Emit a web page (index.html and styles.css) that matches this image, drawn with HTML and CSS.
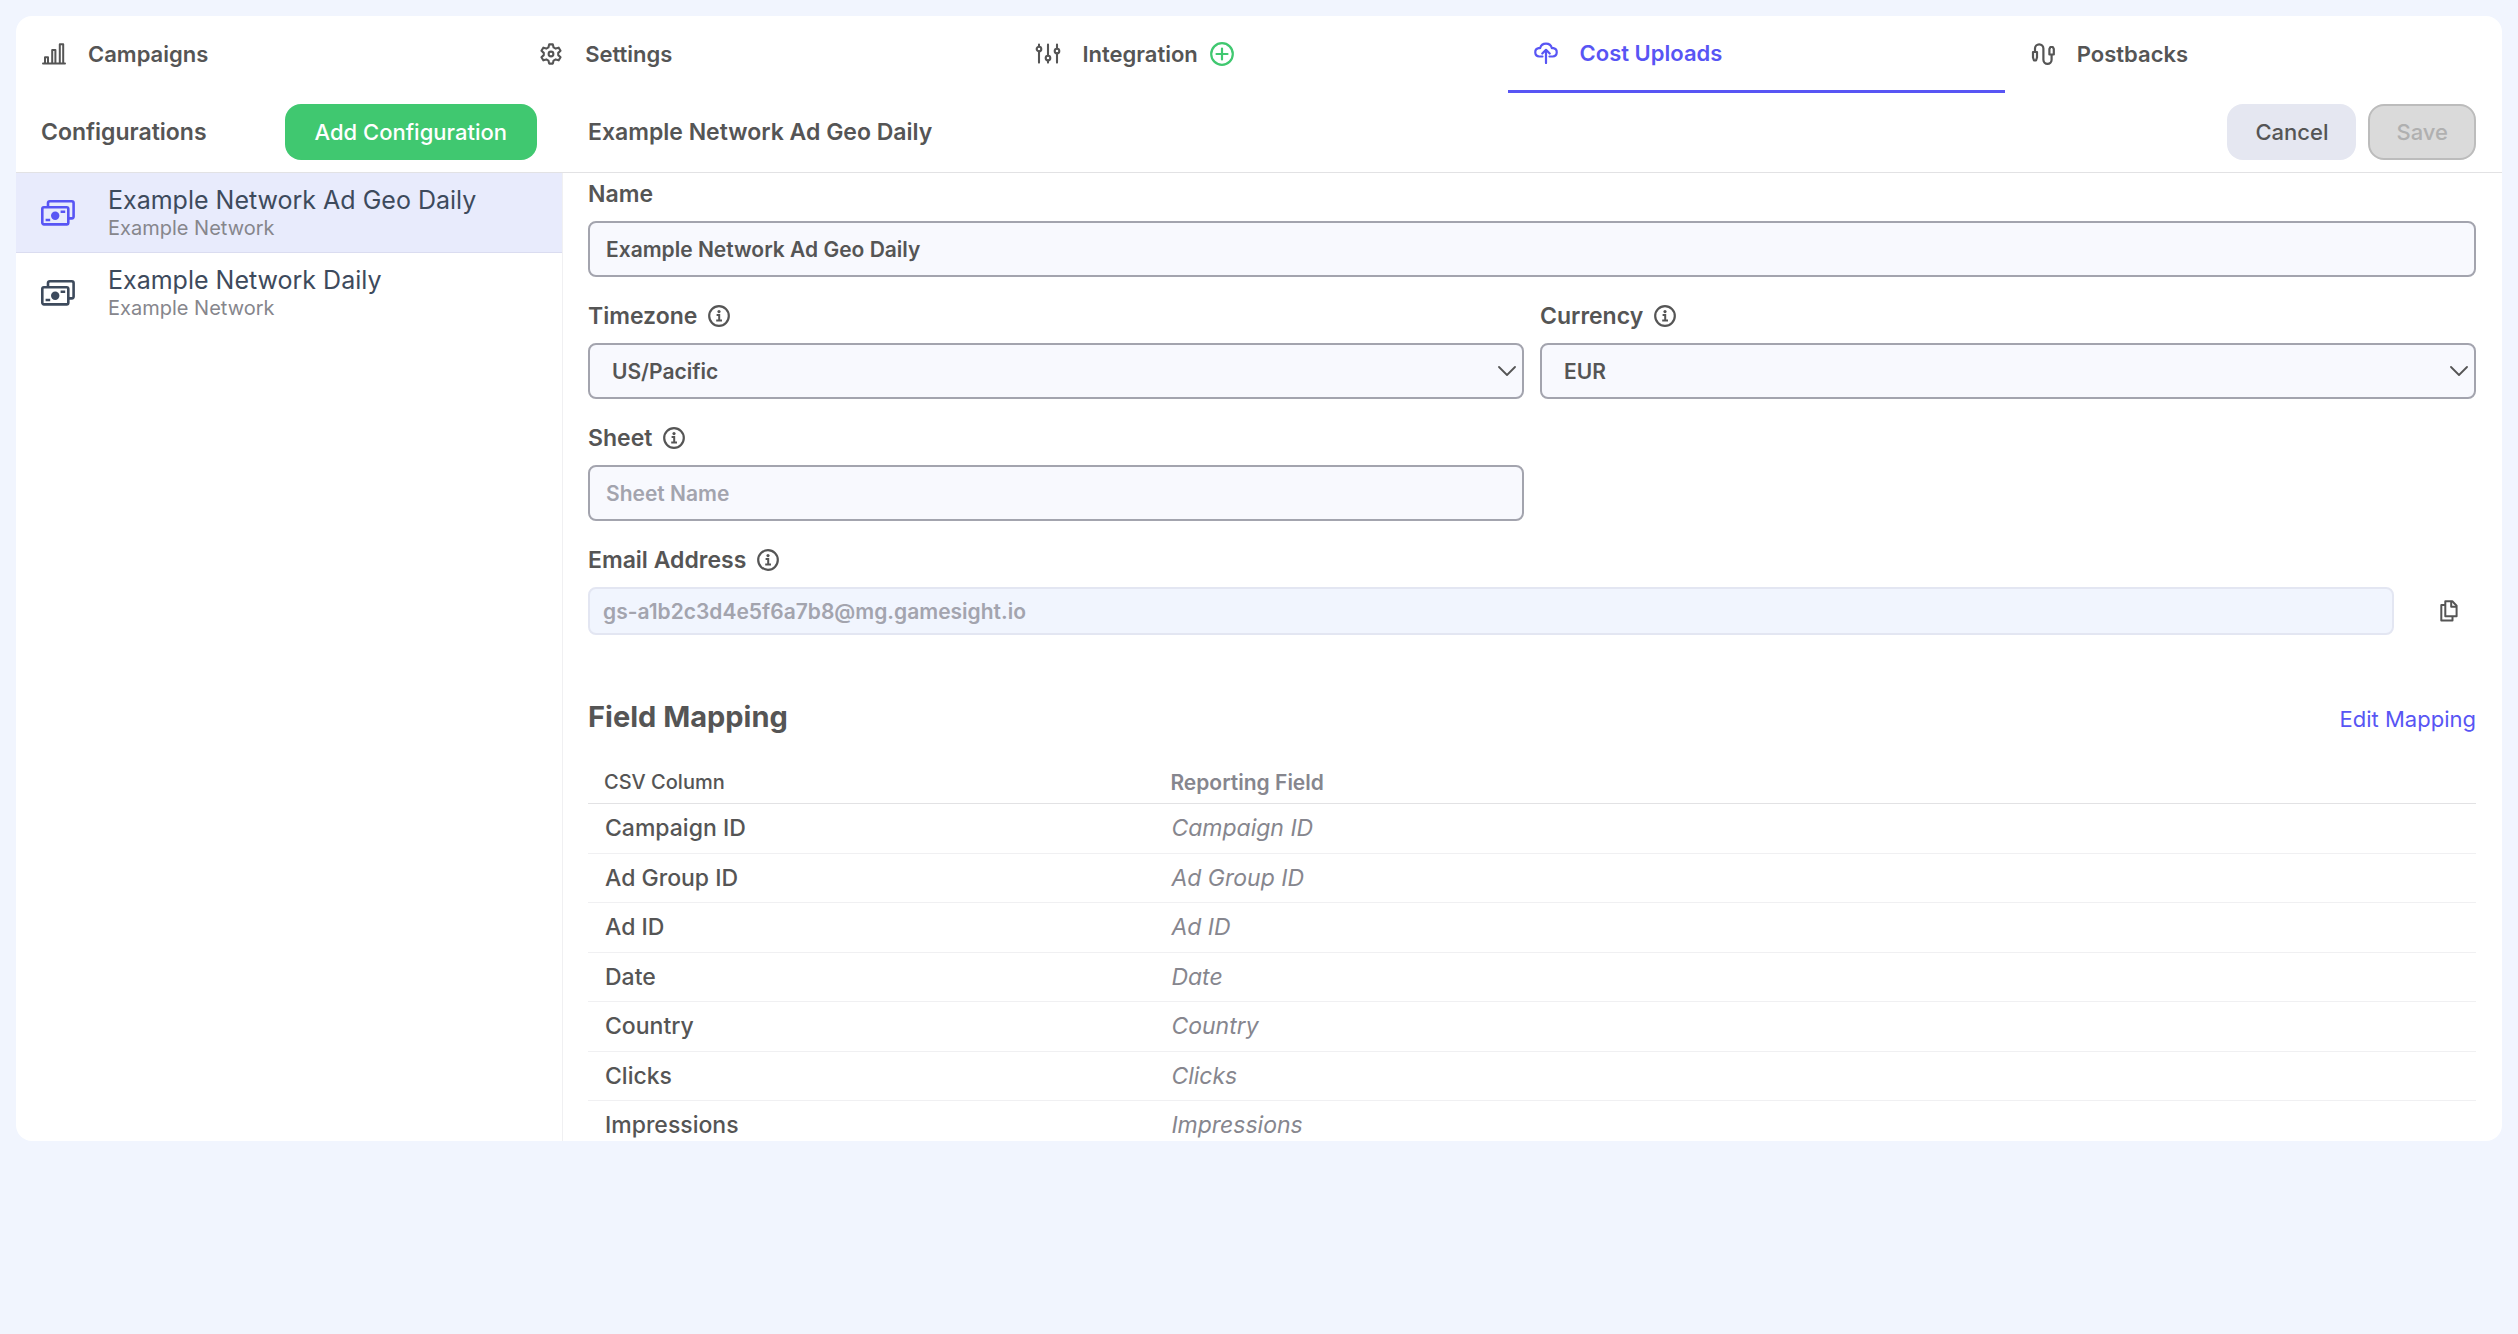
FILE: index.html
```html
<!DOCTYPE html>
<html lang="en">
<head>
<meta charset="utf-8">
<title>Cost Uploads</title>
<link rel="stylesheet" href="styles.css">
</head>
<body>
<svg width="0" height="0" class="sprite" aria-hidden="true">
  <symbol id="info" viewBox="0 0 22 22">
    <circle cx="11" cy="11" r="9.8" fill="none" stroke="currentColor" stroke-width="2.2"/>
    <circle cx="11" cy="6.6" r="1.6" fill="currentColor"/>
    <path d="M8.600 9.900h2.600v5.600M8.200 15.600h5.800" fill="none" stroke="currentColor" stroke-width="2"/>
  </symbol>
  <symbol id="chevron" viewBox="0 0 18 10">
    <path d="M1 1l8 8 8-8" fill="none" stroke="currentColor" stroke-width="1.8" stroke-linecap="round" stroke-linejoin="round"/>
  </symbol>
  <symbol id="cash" viewBox="0 0 34 26">
    <g fill="none" stroke="currentColor" stroke-width="2.6" stroke-linejoin="round">
      <rect x="1.300" y="7.200" width="26" height="17.200" rx="1.600"/>
      <path d="M7 7V3q0-1.700 1.800-1.700h22q1.800 0 1.800 1.700v13.600q0 1.800-1.800 1.800h-3.400"/>
    </g>
    <circle cx="14.200" cy="15.800" r="4.200" fill="currentColor"/>
    <path d="M19.600 10.600h4.600v2.400h-4.600zM4.600 18.800h4.600v2.400H4.600z" fill="currentColor"/>
  </symbol>
</svg>

<main class="card">
  <nav class="tabs">
    <a class="tab" href="#campaigns">
      <svg class="tab-icon" viewBox="0 0 24 22"><g fill="none" stroke="currentColor" stroke-width="2" stroke-linejoin="round"><path d="M1 20.500h22" stroke-linecap="round"/><path d="M3 20.500v-6.200h3v6.200M10.200 20.500V7h3.200v13.500M17.800 20.500V1.200h3.400v19.300"/></g></svg>
      <span>Campaigns</span>
    </a>
    <a class="tab" href="#settings">
      <svg class="tab-icon" viewBox="0 0 24 24"><g fill="none" stroke="currentColor" stroke-width="2.300" stroke-linejoin="round"><path d="M10 1.500h4l.8 3.300 2.300 1.300 3.300-1 2 3.400-2.500 2.300v2.400l2.500 2.300-2 3.400-3.300-1-2.300 1.300-.8 3.300h-4l-.8-3.300-2.300-1.300-3.300 1-2-3.400 2.500-2.300v-2.400L1.600 8.500l2-3.400 3.300 1 2.300-1.300z"/><circle cx="12" cy="12" r="2.600"/></g></svg>
      <span>Settings</span>
    </a>
    <a class="tab" href="#integration">
      <svg class="tab-icon" viewBox="0 0 24 22"><g fill="none" stroke="currentColor" stroke-width="2.100" stroke-linecap="round"><path d="M3 1.500v2M3 8.400v11.200M12 1.500v11M12 17.500v2.100M21 1.500v4M21 10.400v9.200"/><circle cx="3" cy="6" r="2.300"/><circle cx="12" cy="15" r="2.300"/><circle cx="21" cy="8" r="2.300"/></g></svg>
      <span>Integration</span>
      <svg class="plus" viewBox="0 0 24 24"><g fill="none" stroke="currentColor" stroke-width="2.200" stroke-linecap="round"><circle cx="12" cy="12" r="10.800"/><path d="M12 6.500v11M6.500 12h11"/></g></svg>
    </a>
    <a class="tab active" href="#cost-uploads" aria-current="page">
      <svg class="tab-icon" viewBox="0 0 24 22"><g fill="none" stroke="currentColor" stroke-width="2.200" stroke-linecap="round" stroke-linejoin="round"><path d="M8.500 14.500H5.200a4.200 4.200 0 0 1-.6-8.300h1.500a6.100 6.100 0 0 1 11.800 0h1.500a4.200 4.200 0 0 1-.6 8.300h-3.300"/><path d="M12 21V8M8.300 11.500L12 7.800l3.700 3.700"/></g></svg>
      <span>Cost Uploads</span>
    </a>
    <a class="tab" href="#postbacks">
      <svg class="tab-icon" viewBox="0 0 24 22"><g fill="none" stroke="currentColor" stroke-width="2.200" stroke-linejoin="round"><path d="M4 8.500V5.500a4.200 4.200 0 0 1 8.400 0v11.200a4.100 4.100 0 0 0 8.200 0V12"/><path d="M2 9h4v5.500L5 17.500H3l-1-3z"/><path d="M18.400 11.500V6l1-2h2.400l1 2v5.500z"/></g></svg>
      <span>Postbacks</span>
    </a>
  </nav>

  <header class="toolbar">
    <div class="toolbar-side">
      <h2 class="heading">Configurations</h2>
      <button type="button" class="btn btn-add">Add Configuration</button>
    </div>
    <div class="toolbar-main">
      <h2 class="heading">Example Network Ad Geo Daily</h2>
      <div class="actions">
        <button type="button" class="btn btn-cancel">Cancel</button>
        <button type="button" class="btn btn-save" disabled>Save</button>
      </div>
    </div>
  </header>

  <div class="body">
    <aside class="sidebar">
      <a class="item selected" href="#geo-daily">
        <svg class="item-icon"><use href="#cash"/></svg>
        <span class="item-text"><span class="item-title">Example Network Ad Geo Daily</span><span class="item-sub">Example Network</span></span>
      </a>
      <a class="item" href="#daily">
        <svg class="item-icon"><use href="#cash"/></svg>
        <span class="item-text"><span class="item-title">Example Network Daily</span><span class="item-sub">Example Network</span></span>
      </a>
    </aside>

    <section class="content">
      <form class="form">
        <div class="field wide">
          <label class="label" for="name">Name</label>
          <input class="control" id="name" type="text" value="Example Network Ad Geo Daily">
        </div>
        <div class="field">
          <label class="label" for="timezone">Timezone <svg class="info"><use href="#info"/></svg></label>
          <div class="select">
            <select class="control" id="timezone"><option>US/Pacific</option></select>
            <svg class="chevron"><use href="#chevron"/></svg>
          </div>
        </div>
        <div class="field">
          <label class="label" for="currency">Currency <svg class="info"><use href="#info"/></svg></label>
          <div class="select">
            <select class="control" id="currency"><option>EUR</option></select>
            <svg class="chevron"><use href="#chevron"/></svg>
          </div>
        </div>
        <div class="field start">
          <label class="label" for="sheet">Sheet <svg class="info"><use href="#info"/></svg></label>
          <input class="control" id="sheet" type="text" placeholder="Sheet Name">
        </div>
        <div class="field wide">
          <label class="label" for="email">Email Address <svg class="info"><use href="#info"/></svg></label>
          <div class="email-row">
            <input class="control email" id="email" type="text" value="gs-a1b2c3d4e5f6a7b8@mg.gamesight.io" disabled>
            <button type="button" class="copy" aria-label="Copy email address">
              <svg viewBox="0 0 18 22"><g fill="none" stroke="currentColor" stroke-width="2" stroke-linejoin="round"><path d="M5.300 1.300h7l4.300 4.400v10.600H5.300z"/><path d="M11.200 1.500v5.300h5.200"/><path d="M5 5H1.300v15.500h11.200v-4"/></g></svg>
            </button>
          </div>
        </div>
      </form>

      <div class="mapping-head">
        <h3 class="mapping-title">Field Mapping</h3>
        <a class="edit" href="#edit-mapping">Edit Mapping</a>
      </div>
      <table class="mapping">
        <thead><tr><th class="csv">CSV Column</th><th>Reporting Field</th></tr></thead>
        <tbody>
          <tr><td>Campaign ID</td><td>Campaign ID</td></tr>
          <tr><td>Ad Group ID</td><td>Ad Group ID</td></tr>
          <tr><td>Ad ID</td><td>Ad ID</td></tr>
          <tr><td>Date</td><td>Date</td></tr>
          <tr><td>Country</td><td>Country</td></tr>
          <tr><td>Clicks</td><td>Clicks</td></tr>
          <tr><td>Impressions</td><td>Impressions</td></tr>
        </tbody>
      </table>
    </section>
  </div>
</main>
</body>
</html>
```
FILE: styles.css
```css
* { box-sizing: border-box; }

body {
  margin: 0;
  padding: 16px;
  background: #f1f5fe;
  color: #555;
  font-family: Inter, "Liberation Sans", sans-serif;
  font-size: 22px;
}

h2, h3 { margin: 0; }
a { color: inherit; text-decoration: none; }
button, input, select { font: inherit; color: inherit; }
.sprite { position: absolute; }

.card {
  display: flex;
  flex-direction: column;
  height: calc(100vh - 209px);
  background: #fff;
  border-radius: 16px;
  overflow: hidden;
}

/* Tabs */
.tabs { display: grid; grid-template-columns: repeat(5, 1fr); height: 77px; flex: none; }
.tab {
  display: flex;
  align-items: center;
  padding: 0 25px;
  border-bottom: 2px solid transparent;
  font-weight: 600;
}
.tab-icon { width: 26px; height: 22px; margin-right: 21px; }
.tab.active { color: #5855f4; border-bottom: 3px solid #5855f4; }
.plus { width: 24px; height: 24px; margin-left: 12px; color: #40c870; }

/* Toolbar */
.toolbar { display: flex; height: 80px; flex: none; padding-bottom: 2px; border-bottom: 1px solid #e2e2e4; }
.toolbar-side, .toolbar-main { display: flex; align-items: center; justify-content: space-between; padding: 0 26px 0 25px; }
.toolbar-side { width: 547px; flex: none; }
.toolbar-main { flex: 1; }
.heading { font-size: 23px; font-weight: 600; line-height: 28px; }
.actions { display: flex; gap: 12px; }
.btn { height: 56px; border: 0; border-radius: 16px; padding: 0 28px; font-weight: 500; }
.btn-add { padding: 0 30px; background: #40c870; color: #fff; }
.btn-cancel { background: #e5e7f1; }
.btn-save { padding: 0 26px; background: #dadada; border: 2px solid #bcbcbc; color: #b0b0b0; }

/* Body */
.body { display: flex; flex: 1; min-height: 0; }
.sidebar { width: 547px; flex: none; border-right: 1px solid #f0f0f2; }
.item { display: flex; align-items: center; height: 80px; padding: 0 25px; color: #3d4a5c; }
.item.selected { background: #e8ebfc; border-bottom: 1px solid #dadcf0; }
.item.selected .item-icon { color: #5855f4; }
.item-icon { width: 34px; height: 26px; margin-right: 33px; }
.item-text { display: flex; flex-direction: column; }
.item-title { font-size: 25px; line-height: 30px; }
.item-sub { font-size: 20px; line-height: 26px; color: #86868c; }

.content { flex: 1; min-width: 0; padding: 7px 26px 0 25px; overflow: hidden; }

/* Form */
.form { display: grid; grid-template-columns: 1fr 1fr; gap: 25px 16px; }
.field { display: flex; flex-direction: column; gap: 13px; }
.wide { grid-column: 1 / -1; }
.start { grid-column: 1; }
.label { display: flex; align-items: center; gap: 11px; font-size: 23px; font-weight: 600; line-height: 28px; }
.info { width: 22px; height: 22px; }
.control {
  width: 100%;
  height: 56px;
  padding: 0 16px;
  border: 2px solid #a3a4ae;
  border-radius: 8px;
  background: #f8f9fe;
  font-size: 21px;
  font-weight: 600;
}
.control::placeholder { color: #a3a4ae; opacity: 1; }
.select { position: relative; }
.select .control { appearance: none; padding: 0 22px; }
.chevron { position: absolute; right: 8px; top: 23px; width: 18px; height: 10px; pointer-events: none; }
.email-row { display: flex; align-items: center; }
.email { flex: 1; height: 48px; padding: 0 13px; background: #f1f5fe; border-color: #e3e6f2; color: #a3a4ae; }
.copy { display: flex; justify-content: flex-end; width: 82px; height: 48px; padding: 0 18px; align-items: center; border: 0; background: none; }
.copy svg { width: 18px; height: 22px; }

/* Mapping */
.mapping-head { display: flex; align-items: baseline; justify-content: space-between; margin-top: 64px; height: 40px; }
.mapping-title { font-size: 29px; font-weight: 700; }
.edit { color: #5855f4; }
.mapping { width: 100%; margin-top: 23px; border-collapse: collapse; table-layout: fixed; text-align: left; }
.mapping th { height: 41px; padding: 0 16px; border-bottom: 1px solid #e2e2e4; font-size: 21px; font-weight: 600; color: #86868e; }
.mapping .csv { width: 30%; font-size: 20px; font-weight: 500; color: #555; }
.mapping td { height: 50px; padding: 0 17px; border-bottom: 1px solid #f0f0f2; font-size: 23px; }
.mapping tr:nth-child(even) td { height: 49px; }
.mapping td:first-child { font-weight: 500; }
.mapping td:last-child { font-style: italic; color: #86868e; }
```
